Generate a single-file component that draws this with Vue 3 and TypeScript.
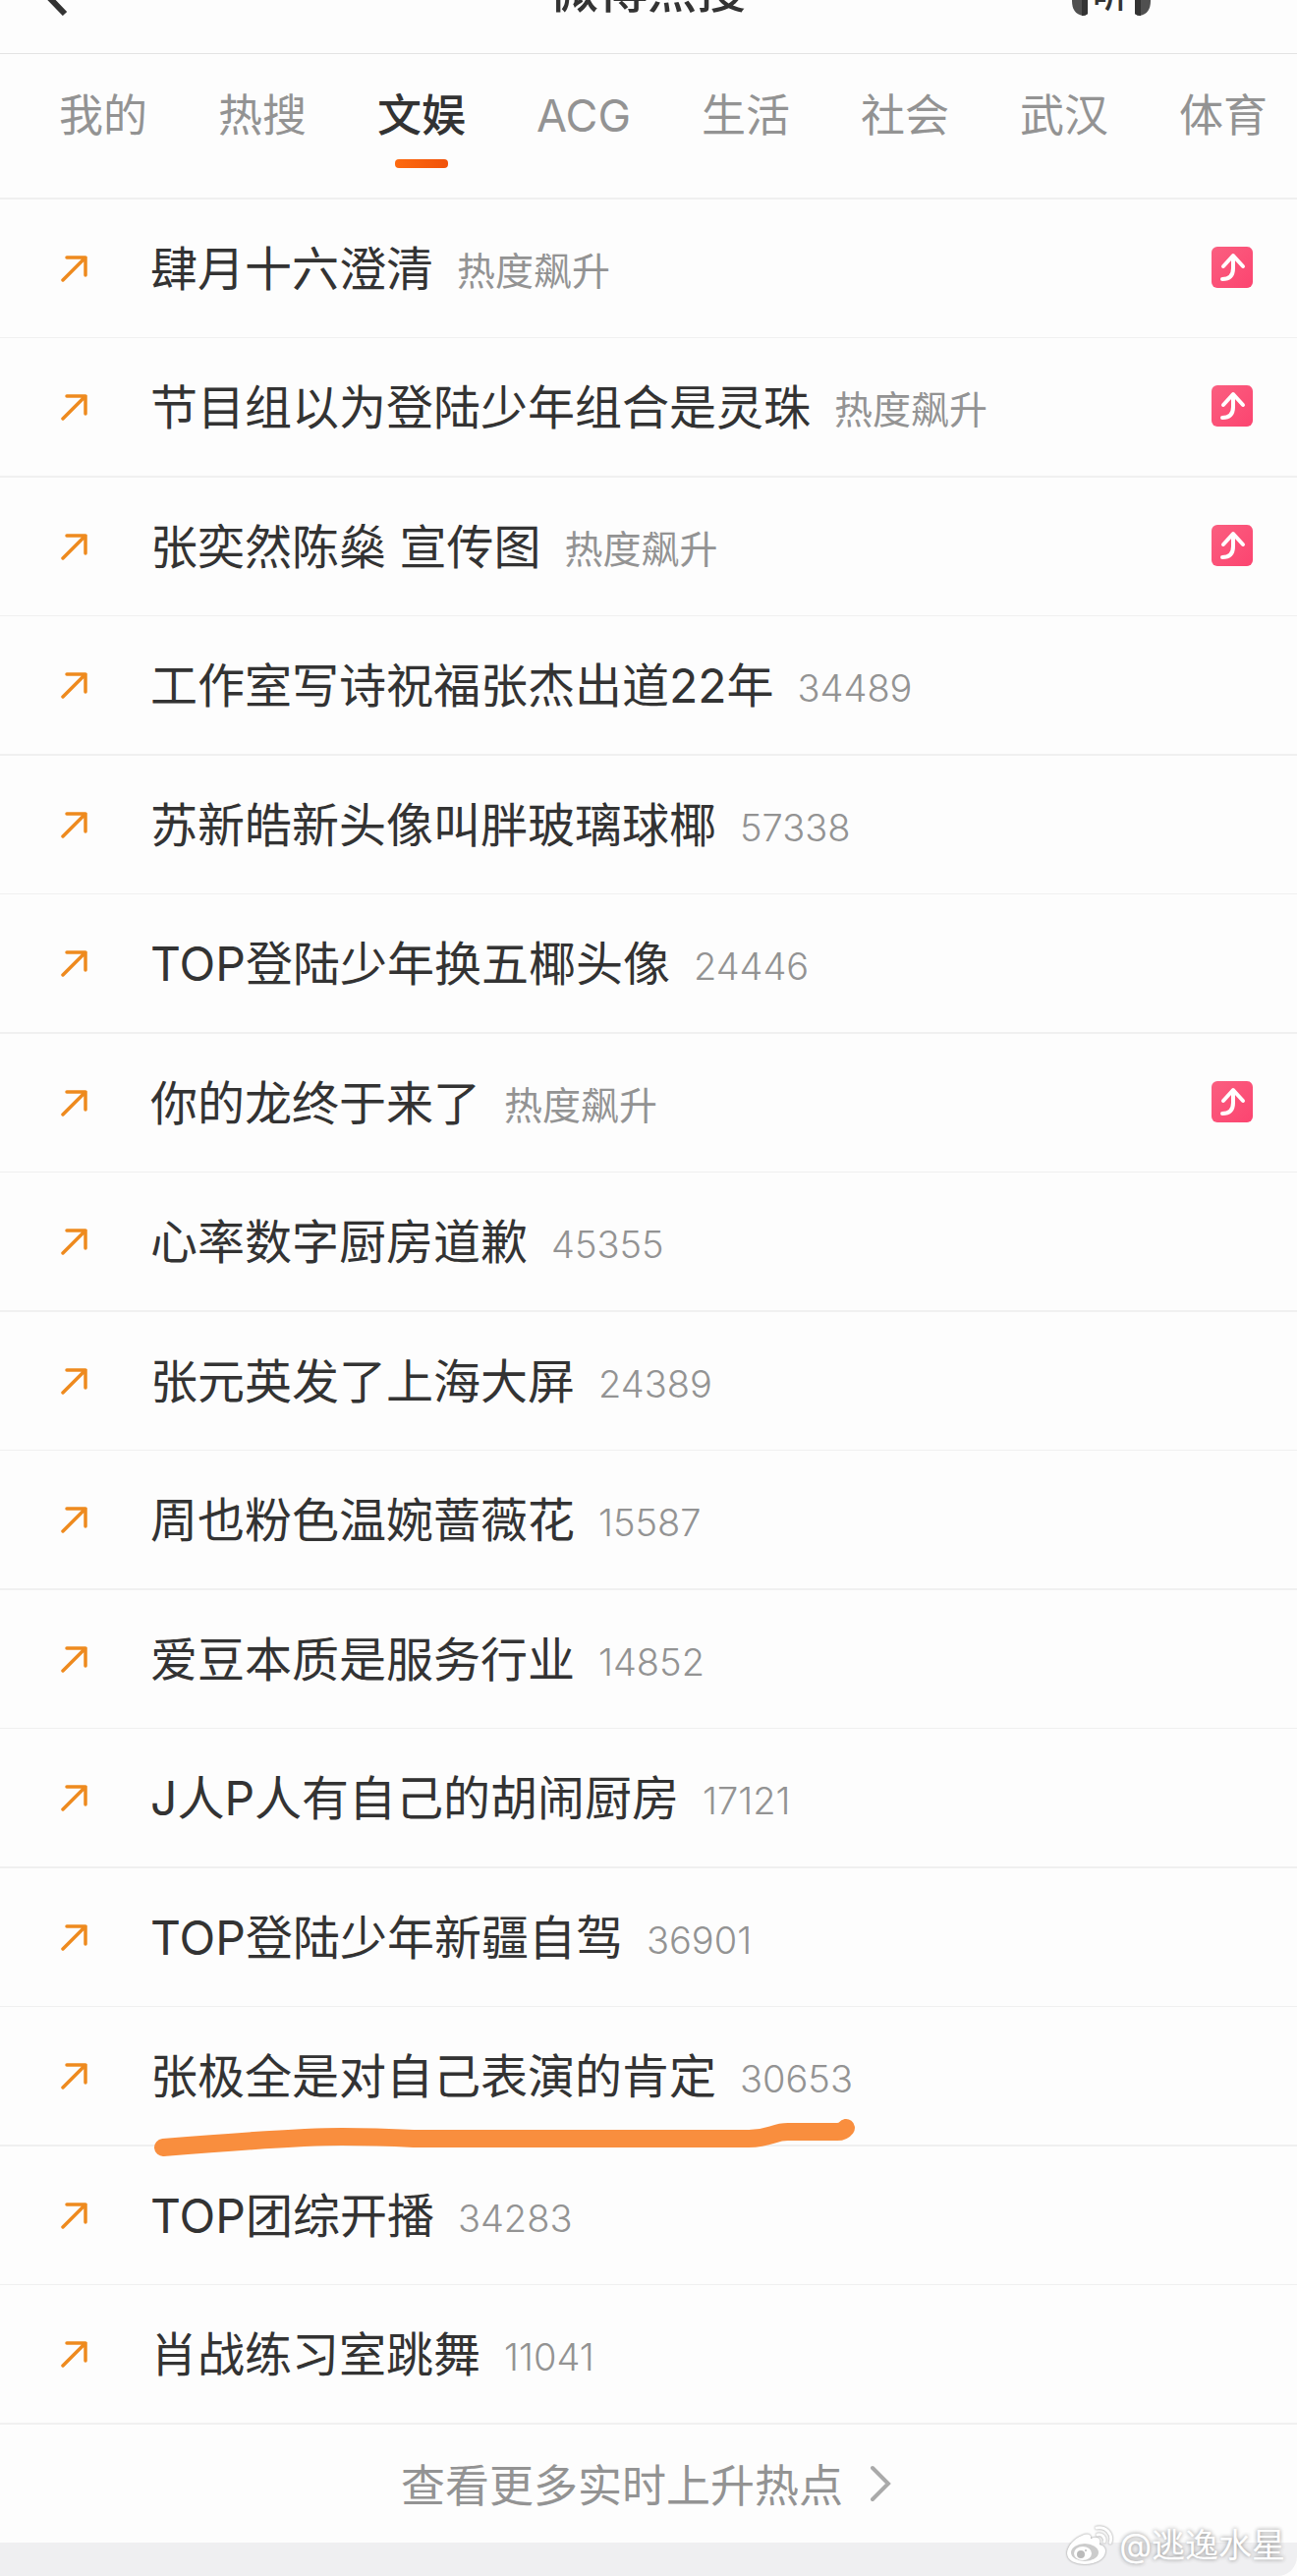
<script setup lang="ts">
import { ref } from 'vue'

interface Topic {
  title: string
  heat: string
  rising?: boolean
  marked?: boolean
}

const tabs: string[] = ['我的', '热搜', '文娱', 'ACG', '生活', '社会', '武汉', '体育']
const active = ref('文娱')

const SURGE = '热度飙升'
const topics: Topic[] = [
  { title: '肆月十六澄清', heat: SURGE, rising: true },
  { title: '节目组以为登陆少年组合是灵珠', heat: SURGE, rising: true },
  { title: '张奕然陈燊 宣传图', heat: SURGE, rising: true },
  { title: '工作室写诗祝福张杰出道22年', heat: '34489' },
  { title: '苏新皓新头像叫胖玻璃球椰', heat: '57338' },
  { title: 'TOP登陆少年换五椰头像', heat: '24446' },
  { title: '你的龙终于来了', heat: SURGE, rising: true },
  { title: '心率数字厨房道歉', heat: '45355' },
  { title: '张元英发了上海大屏', heat: '24389' },
  { title: '周也粉色温婉蔷薇花', heat: '15587' },
  { title: '爱豆本质是服务行业', heat: '14852' },
  { title: 'J人P人有自己的胡闹厨房', heat: '17121' },
  { title: 'TOP登陆少年新疆自驾', heat: '36901' },
  { title: '张极全是对自己表演的肯定', heat: '30653', marked: true },
  { title: 'TOP团综开播', heat: '34283' },
  { title: '肖战练习室跳舞', heat: '11041' },
]
</script>

<template>
  <div class="page">
    <header class="header">
      <button class="icon-button" type="button" aria-label="返回">
        <svg width="36" height="62" viewBox="0 0 36 62" fill="none" stroke="#333" stroke-width="6">
          <path d="M32 60 4 31 32 3" />
        </svg>
      </button>
      <h1 class="heading">微博热搜</h1>
      <button class="icon-button" type="button" aria-label="听热搜">
        <svg width="80" height="66" viewBox="0 0 80 66">
          <path d="M6 40V34a34 30 0 0 1 68 0v6" fill="none" stroke="#333" stroke-width="5" />
          <path d="M16 36v28q-2 2-5 2Q0 64 0 51T16 36Z" fill="#505050" />
          <path d="M10 36h6v28q-2 2-6 2Z" fill="#333" />
          <path d="M64 36v28q2 2 5 2 11-2 11-15T64 36Z" fill="#505050" />
          <path d="M64 36h6v30q-4 0-6-2Z" fill="#333" />
          <text x="21" y="58" class="listen">听</text>
        </svg>
      </button>
    </header>

    <nav class="tabs">
      <button
        v-for="tab in tabs"
        :key="tab"
        type="button"
        class="tab"
        :class="{ active: tab === active }"
        @click="active = tab"
      >
        {{ tab }}
      </button>
    </nav>

    <ul class="list">
      <li v-for="topic in topics" :key="topic.title" class="row">
        <a class="link" href="#">
          <svg class="trend" width="32" height="28" viewBox="0 0 32 28" fill="none" stroke="#ee8a1e" stroke-width="3.5" stroke-linecap="round" stroke-linejoin="round">
            <path d="M8 3H27V21M27 3 4 26" />
          </svg>
          <span class="title">{{ topic.title }}</span>
          <span class="heat" :class="{ count: !topic.rising }">{{ topic.heat }}</span>
          <span v-if="topic.rising" class="badge">
            <svg width="42" height="42" viewBox="0 0 42 42" fill="none" stroke="#fff" stroke-width="4" stroke-linecap="round" stroke-linejoin="round">
              <path d="M12 20 22 9 32 20M22 10v12q0 11-11 11" />
            </svg>
          </span>
        </a>
        <svg v-if="topic.marked" class="stroke" width="720" height="50" viewBox="0 0 720 50" fill="none" stroke="#f98e3e" stroke-width="18" stroke-linecap="round" stroke-linejoin="round">
          <path d="M14 36Q150 25 196 25 230 25 269 27H608C633 27 634 20 650 20H700Q706 20 709 16" />
        </svg>
      </li>
    </ul>

    <a class="more" href="#">
      <span>查看更多实时上升热点</span>
      <svg width="26" height="40" viewBox="0 0 26 40" fill="none" stroke="#aaa" stroke-width="4" stroke-linecap="round">
        <path d="M2 4 18 20 2 36" />
      </svg>
    </a>

    <footer class="bottom">
      <div class="watermark">
        <svg width="50" height="42" viewBox="0 0 50 42">
          <path
            d="M16 11C8 14 1 22 1 29c0 7 8 11 18 11 12 0 21-6 21-13 0-4-2-6-6-7 2-6-2-9-9-6 1-4-3-6-9-3Z"
            fill="#fff"
          />
          <ellipse cx="19" cy="28" rx="14" ry="9" fill="#ccc" />
          <ellipse cx="17" cy="29" rx="9" ry="7" fill="#fff" />
          <circle cx="15" cy="30" r="4" fill="#bbb" />
          <circle cx="20" cy="26" r="1" fill="#bbb" />
          <path d="M31 3c9-2 17 6 14 15M32 10c5-1 8 3 7 7" fill="none" stroke="#fff" stroke-width="3" stroke-linecap="round" />
        </svg>
        <span>@逃逸水星</span>
      </div>
    </footer>
  </div>
</template>

<style>
body {
  margin: 0;
  background: #fdfdfd;
}
</style>

<style scoped>
.page {
  background: #fdfdfd;
  color: #333;
  font-family: Inter, 'Noto Sans CJK SC', sans-serif;
}

button {
  padding: 0;
  border: 0;
  background: none;
  color: inherit;
  font: inherit;
}

a {
  color: inherit;
  text-decoration: none;
}

svg {
  display: block;
  flex: none;
}

/* Scrolled part-way off: its contents rest above the lower edge */
.header {
  display: grid;
  grid-template-columns: 1fr auto 1fr;
  align-items: end;
  grid-template-rows: 16px;
  height: 54px;
  padding: 0 149px 0 34px;
  border-bottom: 1px solid #e3e3e3;
  overflow: hidden;
}

.icon-button {
  justify-self: start;
}

.icon-button:last-child {
  justify-self: end;
}

.heading {
  margin: 0 0 0 113px;
  font-size: 50px;
  line-height: 52px;
  font-weight: 500;
}

.listen {
  font-size: 36px;
  font-weight: 500;
  fill: #333;
}

.tabs {
  display: flex;
  gap: 72px;
  padding: 33px 29px 30px 60px;
  border-bottom: 2px solid #f0f0f0;
  overflow: hidden;
}

.tab {
  flex: none;
  color: #939393;
  font-size: 45px;
  line-height: 60px;
}

.tab::after {
  content: '';
  display: block;
  width: 54px;
  height: 9px;
  margin: 14px auto 0;
  border-radius: 4px;
}

.tab.active {
  color: #333;
  font-weight: 500;
}

.tab.active::after {
  background: linear-gradient(90deg, #fd6a10, #f1520a);
}

.list {
  margin: 0;
  padding: 0;
  list-style: none;
}

.row {
  position: relative;
  border-bottom: 1px solid #f0f0f0;
}

.row:nth-child(even) {
  border-bottom-width: 2px;
}

.link {
  display: flex;
  align-items: center;
  height: 140px;
  padding: 0 45px 0 60px;
  white-space: nowrap;
}

.title {
  margin-left: 61px;
  padding-top: 2px;
  font-size: 48px;
  line-height: 72px;
}

.heat {
  margin-left: 24px;
  padding-top: 6px;
  color: #939393;
  font-size: 39px;
  line-height: 60px;
}

.heat.count {
  font-size: 38px;
  font-weight: 300;
}

.badge {
  margin: 0 0 2px auto;
  border-radius: 6px;
  background: linear-gradient(135deg, #fa5f80, #fc4470);
}

.stroke {
  position: absolute;
  z-index: 1;
  left: 152px;
  bottom: -17px;
}

.more {
  display: flex;
  align-items: center;
  justify-content: center;
  gap: 28px;
  height: 120px;
  color: #939393;
  font-size: 45px;
}

.more span {
  padding-bottom: 2px;
}

.bottom {
  display: flex;
  align-items: flex-end;
  justify-content: flex-end;
  height: 34px;
  padding-right: 12px;
  border-radius: 0 0 20px 0;
  background: #efeff1;
}

.watermark {
  display: flex;
  align-items: center;
  gap: 4px;
  margin-bottom: 8px;
  color: #fff;
  font-size: 34px;
  line-height: 46px;
  text-shadow: 0 0 4px #888;
}

.watermark svg {
  filter: drop-shadow(0 0 1px #888);
}
</style>
